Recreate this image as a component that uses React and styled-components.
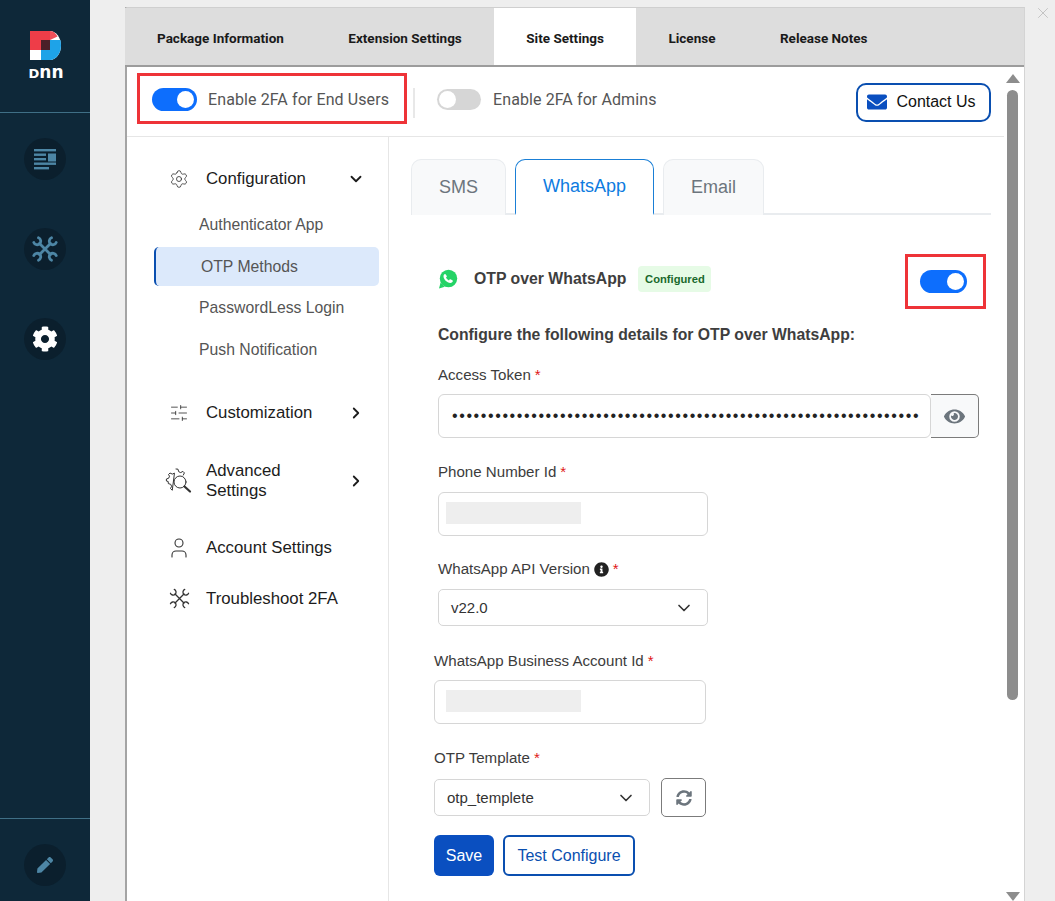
import React from "react";
import styled, { createGlobalStyle } from "styled-components";
import { FaCog, FaEnvelope, FaEye, FaInfoCircle, FaPen, FaSyncAlt } from "react-icons/fa";
import { ChevronDown, ChevronRight, Settings, SlidersHorizontal, User, X } from "lucide-react";

const GlobalStyle = createGlobalStyle`
  html, body {
    margin: 0;
    padding: 0;
    height: 901px;
    overflow: hidden;
    background: #eeeeee;
    font-family: "Liberation Sans", Arial, sans-serif;
    color: #3c3c3c;
  }
  * { box-sizing: border-box; }
`;

const Page = styled.div`
  display: flex;
  width: 1055px;
  height: 901px;
  overflow: hidden;
  position: relative;
`;

const Rail = styled.nav`
  width: 90px;
  flex: none;
  background: #0e2839;
  display: flex;
  flex-direction: column;
`;

const LogoBox = styled.div`
  height: 113px;
  padding-top: 30px;
  border-bottom: 1px solid #3f6f86;
  display: flex;
  flex-direction: column;
  align-items: center;
`;

const LogoWord = styled.div`
  font-family: "DejaVu Sans", sans-serif;
  font-weight: 700;
  font-size: 17px;
  line-height: 14px;
  height: 14px;
  margin-top: 4px;
  padding-left: 2px;
  color: #ffffff;
  span { font-size: 13px; }
`;

const RailItems = styled.div`
  flex: 1;
  padding-top: 25px;
  display: flex;
  flex-direction: column;
  align-items: center;
  gap: 48px;
`;

const RailFoot = styled.div`
  height: 83px;
  border-top: 1px solid #3f6f86;
  padding-top: 25px;
  display: flex;
  justify-content: center;
`;

const RailCircle = styled.div`
  width: 42px;
  height: 42px;
  border-radius: 50%;
  background: #0b1f2d;
  color: ${(p) => (p.$on ? "#ffffff" : "#4d86a5")};
  font-size: ${(p) => p.$size || 24}px;
  display: flex;
  align-items: center;
  justify-content: center;
`;

const Panel = styled.main`
  width: 900px;
  margin: 7px 0 0 35px;
  height: 894px;
  flex: none;
  background: #ffffff;
  border-left: 2px solid #a4a4a4;
  border-right: 1px solid #d4d4d4;
  border-top: 1px solid #cfcfcf;
  display: flex;
  flex-direction: column;
`;

const TopTabs = styled.div`
  height: 59px;
  flex: none;
  background: #dddddd;
  border-bottom: 2px solid #9c9c9c;
  display: flex;
  margin-left: -2px;
`;

const TopTab = styled.div`
  padding: 22px 32.5px 0 32px;
  font-family: Roboto, sans-serif;
  font-size: 13.5px;
  font-weight: 700;
  line-height: 16px;
  color: #1a1a1a;
  height: 57px;
  background: ${(p) => (p.$active ? "#ffffff" : "transparent")};
`;

const Frame = styled.div`
  flex: 1;
  min-height: 0;
  display: flex;
`;

const Main = styled.div`
  flex: 1;
  min-width: 0;
  display: flex;
  flex-direction: column;
`;

const StatusBar = styled.div`
  height: 70px;
  flex: none;
  border-bottom: 1px solid #e6e6e6;
  display: flex;
  align-items: center;
  padding: 0 13px 0 10px;
`;

const AlertBox = styled.div`
  width: 270px;
  height: 51px;
  margin-top: -6px;
  border: 3px solid #ee3338;
  display: flex;
  align-items: center;
  padding: 1px 0 0 12px;
  gap: 11px;
`;

const Track = styled.span`
  display: flex;
  align-items: center;
  flex: none;
  width: ${(p) => p.$w || 45}px;
  height: ${(p) => (p.$on ? 23 : 21)}px;
  padding: 0 ${(p) => (p.$on ? 3 : 2)}px;
  border-radius: 12px;
  justify-content: ${(p) => (p.$on ? "flex-end" : "flex-start")};
  background: ${(p) => (p.$on ? "#0d6efd" : "#d6d6d6")};
`;

const Knob = styled.span`
  width: 17px;
  height: 17px;
  border-radius: 50%;
  background: #ffffff;
`;

const ToggleLabel = styled.span`
  font-family: Roboto, sans-serif;
  font-size: 16px;
  letter-spacing: 0.1px;
  color: #555555;
  white-space: nowrap;
`;

const Rule = styled.div`
  width: 2px;
  height: 30px;
  background: #e8e8e8;
  margin: 0 22px 0 6px;
  position: relative;
  top: 1px;
`;

const AdminToggle = styled.div`
  display: flex;
  align-items: center;
  gap: 12px;
  margin-top: -5px;
`;

const ContactButton = styled.button`
  margin: 1px 0 0 auto;
  width: 135px;
  height: 39px;
  border: 2px solid #0a4fb0;
  border-radius: 10px;
  background: #ffffff;
  color: #111111;
  font: 16px "Liberation Sans", Arial, sans-serif;
  display: flex;
  align-items: center;
  justify-content: center;
  gap: 9px;
  padding: 0 4px 0 0;
  svg { color: #0a4fc0; font-size: 20px; }
`;

const Columns = styled.div`
  flex: 1;
  min-height: 0;
  display: flex;
`;

const Menu = styled.aside`
  width: 262px;
  flex: none;
  border-right: 1px solid #e6e6e6;
  padding: 30px 9px 0 27px;
`;

const MenuHead = styled.div`
  display: flex;
  align-items: center;
  min-height: ${(p) => p.$h || 24}px;
  margin-top: ${(p) => p.$top || 0}px;
  font-size: 16.8px;
  line-height: 20px;
  color: #1c1c1c;
`;

const MenuIcon = styled.span`
  width: 52px;
  flex: none;
  padding-right: 2px;
  display: flex;
  justify-content: center;
  color: #333333;
`;

const MenuText = styled.span`
  flex: 1;
`;

const MenuArrow = styled.span`
  width: 32px;
  flex: none;
  display: flex;
  color: #1c1c1c;
`;

const SubList = styled.div`
  margin-top: 14px;
  display: flex;
  flex-direction: column;
  gap: 2px;
`;

const SubItem = styled.div`
  height: 39.7px;
  display: flex;
  align-items: center;
  font-size: 15.75px;
  color: #555555;
  padding-left: 45px;
  border-radius: 5px;
  ${(p) => p.$active && "background: #dce9fb; border-left: 2px solid #0a4fb0;"}
`;

const Content = styled.section`
  flex: 1;
  min-width: 0;
  padding: 22px 13px 0 22px;
  overflow: hidden;
`;

const MethodTabs = styled.div`
  display: flex;
  gap: 9px;
  height: 56px;
  border-bottom: 2px solid #e9ecef;
`;

const MethodTab = styled.div`
  width: ${(p) => p.$w}px;
  height: 56px;
  display: flex;
  align-items: center;
  justify-content: center;
  font-size: 18px;
  border-radius: 10px 10px 0 0;
  border: 1px solid ${(p) => (p.$active ? "#1a7fd6" : "#e9ecef")};
  border-bottom: ${(p) => (p.$active ? "2px solid #ffffff" : "0")};
  background: ${(p) => (p.$active ? "#ffffff" : "#f8f9fa")};
  color: ${(p) => (p.$active ? "#0d7be0" : "#6c757d")};
`;

const Form = styled.div`
  padding: 39px 0 0 27px;
  display: flex;
  flex-direction: column;
  width: 568px;
`;

const MethodRow = styled.div`
  display: flex;
  align-items: center;
  height: 55px;
`;

const MethodInfo = styled.div`
  display: flex;
  align-items: center;
  margin-top: -5px;
`;

const MethodTitle = styled.strong`
  margin-left: 16px;
  font-size: 15.8px;
  color: #3e3e3e;
`;

const StatusPill = styled.span`
  margin-left: 12px;
  height: 26px;
  width: 73px;
  border-radius: 4px;
  background: #e6fbe6;
  color: #19692c;
  font-size: 11.2px;
  font-weight: 700;
  display: flex;
  align-items: center;
  justify-content: center;
`;

const ToggleBox = styled.div`
  margin-left: auto;
  margin-right: -7px;
  width: 81px;
  height: 55px;
  border: 3px solid #ee3338;
  display: flex;
  align-items: center;
  justify-content: center;
  padding-right: 4px;
`;

const Intro = styled.div`
  margin-top: 17px;
  font-size: 15.75px;
  font-weight: 700;
  line-height: 18px;
  color: #3e3e3e;
`;

const Field = styled.div`
  display: flex;
  flex-direction: column;
  margin-top: ${(p) => p.$top}px;
  margin-left: ${(p) => p.$shift || 0}px;
`;

const Label = styled.label`
  font-size: 15.1px;
  line-height: 18px;
  color: #3c3c3c;
  display: flex;
  align-items: center;
  gap: 4px;
  margin-bottom: ${(p) => p.$gap || 10}px;
  svg { color: #222222; font-size: 15px; }
  b { color: #e01818; font-weight: 400; }
`;

const TokenRow = styled.div`
  display: flex;
  height: 44px;
`;

const TokenInput = styled.input`
  flex: 1;
  min-width: 0;
  height: 44px;
  border: 1px solid #d6d6d6;
  border-radius: 6px;
  padding: 0 10px 0 13px;
  background: #ffffff;
  font-size: 16px;
  letter-spacing: 1.6px;
  color: #222222;
  outline: none;
`;

const EyeButton = styled.div`
  width: 48px;
  flex: none;
  background: #f8f9fa;
  border: 1px solid #7b7b7b;
  border-left: 0;
  border-radius: 0 5px 5px 0;
  color: #6c757d;
  font-size: 21px;
  display: flex;
  align-items: center;
  justify-content: center;
`;

const TextBox = styled.div`
  width: ${(p) => p.$w}px;
  height: 44px;
  border: 1px solid #d6d6d6;
  border-radius: 6px;
  padding: 9px 0 0 ${(p) => p.$inset || 7}px;
`;

const Redacted = styled.div`
  width: 135px;
  height: 22px;
  background: #eeeeee;
`;

const SelectBox = styled.div`
  width: ${(p) => p.$w}px;
  height: 37px;
  border: 1px solid #d6d6d6;
  border-radius: 5px;
  padding: 0 13px 0 12px;
  font-size: 15px;
  color: #333333;
  display: flex;
  align-items: center;
  justify-content: space-between;
`;

const SelectRow = styled.div`
  display: flex;
  align-items: center;
  gap: 11px;
`;

const RefreshButton = styled.div`
  width: 45px;
  height: 39px;
  border: 1px solid #7b7b7b;
  border-radius: 5px;
  color: #6c757d;
  font-size: 16px;
  display: flex;
  align-items: center;
  justify-content: center;
`;

const Actions = styled.div`
  display: flex;
  gap: 9px;
  margin: 18px 0 0 -4px;
`;

const SaveButton = styled.button`
  width: 60px;
  height: 41px;
  border: 0;
  border-radius: 6px;
  background: #0a4fc0;
  color: #ffffff;
  font: 16px "Liberation Sans", Arial, sans-serif;
`;

const TestButton = styled.button`
  width: 132px;
  height: 41px;
  border: 2px solid #0a4fb0;
  border-radius: 6px;
  background: #ffffff;
  color: #0a4fb0;
  font: 16px "Liberation Sans", Arial, sans-serif;
`;

const Divider = styled.div`
  margin: 25px 0 0 -4px;
  width: 546px;
  height: 1px;
  flex: none;
  background: #dddddd;
`;

const ScrollBar = styled.div`
  width: 20px;
  flex: none;
  display: flex;
  flex-direction: column;
  align-items: center;
  padding: 7px 3px 0 0;
`;

const ArrowUp = styled.div`
  width: 0;
  height: 0;
  flex: none;
  border-left: 7px solid transparent;
  border-right: 7px solid transparent;
  border-bottom: 9px solid #8d8d8d;
`;

const ArrowDown = styled(ArrowUp)`
  border-bottom: 0;
  border-top: 9px solid #8d8d8d;
  margin-top: 192px;
`;

const Thumb = styled.div`
  width: 11px;
  height: 610px;
  flex: none;
  margin-top: 7px;
  border-radius: 6px;
  background: #8d8d8d;
`;

const CloseMark = styled.div`
  position: absolute;
  top: 4px;
  right: 3px;
  color: #b5b5b5;
  display: flex;
`;

const DnnMark = () => (
  <svg width="31" height="31" viewBox="0 0 31 31">
    <path d="M0 1h20c6 0 11 6.500 11 14.500S26 30 20 30H0z" fill="#ffffff" />
    <path d="M0 1h20v1c0 0 0 8 0 8H11v10H0z" fill="#ee3d48" />
    <path d="M20 1c4 0 6 3 7.500 5.500L20 10z" fill="#ee3d48" opacity="0.9" />
    <path d="M11 20h9V10h10.400c.4 1.600.6 3.400.6 5.500C31 23.500 26 30 20 30h-9z" fill="#1ea3e8" />
    <rect x="11" y="10" width="9" height="10" fill="#4a2028" />
    <path d="M0 20h11v10H0z" fill="#ffffff" />
  </svg>
);

const NewsIcon = () => (
  <svg width="24" height="24" viewBox="0 0 24 24" fill="#4d86a5">
    <rect x="1" y="2" width="22" height="2.400" />
    <rect x="1" y="6.500" width="12" height="2.400" />
    <rect x="15" y="6.500" width="8" height="8" />
    <rect x="1" y="11" width="12" height="2.400" />
    <rect x="1" y="15.500" width="22" height="2.400" />
    <rect x="1" y="20" width="15" height="2.400" />
  </svg>
);

const CrossedTools = ({ size = 26, color = "#4d86a5", width = 2.8 }) => (
  <svg width={size} height={size} viewBox="0 0 26 26" fill="none" stroke={color} strokeWidth={width} strokeLinecap="round">
    <path d="M7.500 7.500l11 11M18.500 7.500l-11 11" />
    {[0, 90, 180, 270].map((a) => (
      <path key={a} transform={`rotate(${a} 13 13)`} d="M1.800 6.500A3.600 3.600 0 1 0 6.500 1.800" />
    ))}
  </svg>
);

const AdvancedIcon = () => (
  <svg width="28" height="28" viewBox="0 0 28 28" fill="none" stroke="#333333" strokeWidth="1" strokeLinecap="round" strokeLinejoin="round">
    <path d="M11 2l2 .2.700 2.500 2 .9 2.200-1.200 1.500 1.500-1.100 2.200M7 23l-1.500-1.500 1.100-2.200-.9-2-2.400-.7-.1-2.100-1.800-.5v-2l2.300-.8.800-2L3.500 7.500 5 6l2.300 1.100 1.800-.8z" />
    <circle cx="15" cy="15" r="6" />
    <path d="M19.500 19.500l5.500 5" strokeWidth="2.200" />
  </svg>
);

const WhatsAppIcon = () => (
  <svg width="20" height="20" viewBox="0 0 20 20">
    <circle cx="10.500" cy="9.500" r="8.700" fill="#25d366" />
    <path d="M1 19.500l1.600-6 4.200 4.200z" fill="#25d366" />
    <path d="M7 5c-.5 0-1.500.8-1.500 2.300 0 3 3.500 6.700 6.800 6.700 1.500 0 2.500-1 2.500-1.700 0-.5-.1-.9-.4-1l-2-1c-.3-.1-.6 0-.8.3l-.6.8c-1-.3-2.500-1.700-3-2.900l.7-.7c.2-.2.2-.5.1-.8L7.500 5.200C7.400 5 7.200 5 7 5z" fill="#ffffff" />
  </svg>
);

const Dots = "x".repeat(80);

export default function App() {
  return (
    <Page>
      <GlobalStyle />
      <Rail>
        <LogoBox>
          <DnnMark />
          <LogoWord><span>D</span>nn</LogoWord>
        </LogoBox>
        <RailItems>
          <RailCircle><NewsIcon /></RailCircle>
          <RailCircle><CrossedTools /></RailCircle>
          <RailCircle $on $size={26}><FaCog /></RailCircle>
        </RailItems>
        <RailFoot>
          <RailCircle $size={16}><FaPen /></RailCircle>
        </RailFoot>
      </Rail>

      <Panel>
        <TopTabs>
          <TopTab>Package Information</TopTab>
          <TopTab>Extension Settings</TopTab>
          <TopTab $active>Site Settings</TopTab>
          <TopTab>License</TopTab>
          <TopTab>Release Notes</TopTab>
        </TopTabs>
        <Frame>
          <Main>
            <StatusBar>
              <AlertBox>
                <Track $on><Knob /></Track>
                <ToggleLabel>Enable 2FA for End Users</ToggleLabel>
              </AlertBox>
              <Rule />
              <AdminToggle>
                <Track $w={44}><Knob /></Track>
                <ToggleLabel>Enable 2FA for Admins</ToggleLabel>
              </AdminToggle>
              <ContactButton><FaEnvelope /> Contact Us</ContactButton>
            </StatusBar>
            <Columns>
              <Menu>
                <MenuHead>
                  <MenuIcon><Settings size={20} strokeWidth={1} /></MenuIcon>
                  <MenuText>Configuration</MenuText>
                  <MenuArrow><ChevronDown size={18} strokeWidth={2.4} /></MenuArrow>
                </MenuHead>
                <SubList>
                  <SubItem>Authenticator App</SubItem>
                  <SubItem $active>OTP Methods</SubItem>
                  <SubItem>PasswordLess Login</SubItem>
                  <SubItem>Push Notification</SubItem>
                </SubList>
                <MenuHead $top={31}>
                  <MenuIcon><SlidersHorizontal size={20} strokeWidth={1} /></MenuIcon>
                  <MenuText>Customization</MenuText>
                  <MenuArrow><ChevronRight size={18} strokeWidth={2.4} /></MenuArrow>
                </MenuHead>
                <MenuHead $top={36} $h={40}>
                  <MenuIcon><AdvancedIcon /></MenuIcon>
                  <MenuText>Advanced<br />Settings</MenuText>
                  <MenuArrow><ChevronRight size={18} strokeWidth={2.4} /></MenuArrow>
                </MenuHead>
                <MenuHead $top={35}>
                  <MenuIcon><User size={24} strokeWidth={1.1} /></MenuIcon>
                  <MenuText>Account Settings</MenuText>
                </MenuHead>
                <MenuHead $top={27}>
                  <MenuIcon><CrossedTools size={21} color="#333333" width={1.600} /></MenuIcon>
                  <MenuText>Troubleshoot 2FA</MenuText>
                </MenuHead>
              </Menu>

              <Content>
                <MethodTabs>
                  <MethodTab $w={95}>SMS</MethodTab>
                  <MethodTab $w={139} $active>WhatsApp</MethodTab>
                  <MethodTab $w={101}>Email</MethodTab>
                </MethodTabs>
                <Form>
                  <MethodRow>
                    <MethodInfo>
                      <WhatsAppIcon />
                      <MethodTitle>OTP over WhatsApp</MethodTitle>
                      <StatusPill>Configured</StatusPill>
                    </MethodInfo>
                    <ToggleBox>
                      <Track $on $w={47}><Knob /></Track>
                    </ToggleBox>
                  </MethodRow>
                  <Intro>Configure the following details for OTP over WhatsApp:</Intro>
                  <Field $top={22}>
                    <Label>Access Token <b>*</b></Label>
                    <TokenRow>
                      <TokenInput type="password" readOnly value={Dots} />
                      <EyeButton><FaEye /></EyeButton>
                    </TokenRow>
                  </Field>
                  <Field $top={25}>
                    <Label $gap={11}>Phone Number Id <b>*</b></Label>
                    <TextBox $w={270}><Redacted /></TextBox>
                  </Field>
                  <Field $top={24}>
                    <Label $gap={11}>WhatsApp API Version <FaInfoCircle /> <b>*</b></Label>
                    <SelectBox $w={270}>v22.0 <ChevronDown size={20} strokeWidth={2} /></SelectBox>
                  </Field>
                  <Field $top={26} $shift={-4}>
                    <Label>WhatsApp Business Account Id <b>*</b></Label>
                    <TextBox $w={272} $inset={11}><Redacted /></TextBox>
                  </Field>
                  <Field $top={25} $shift={-4}>
                    <Label $gap={11}>OTP Template <b>*</b></Label>
                    <SelectRow>
                      <SelectBox $w={216}>otp_templete <ChevronDown size={20} strokeWidth={2} /></SelectBox>
                      <RefreshButton><FaSyncAlt /></RefreshButton>
                    </SelectRow>
                  </Field>
                  <Actions>
                    <SaveButton>Save</SaveButton>
                    <TestButton>Test Configure</TestButton>
                  </Actions>
                  <Divider />
                </Form>
              </Content>
            </Columns>
          </Main>
          <ScrollBar>
            <ArrowUp />
            <Thumb />
            <ArrowDown />
          </ScrollBar>
        </Frame>
      </Panel>
      <CloseMark><X size={18} strokeWidth={1} /></CloseMark>
    </Page>
  );
}
